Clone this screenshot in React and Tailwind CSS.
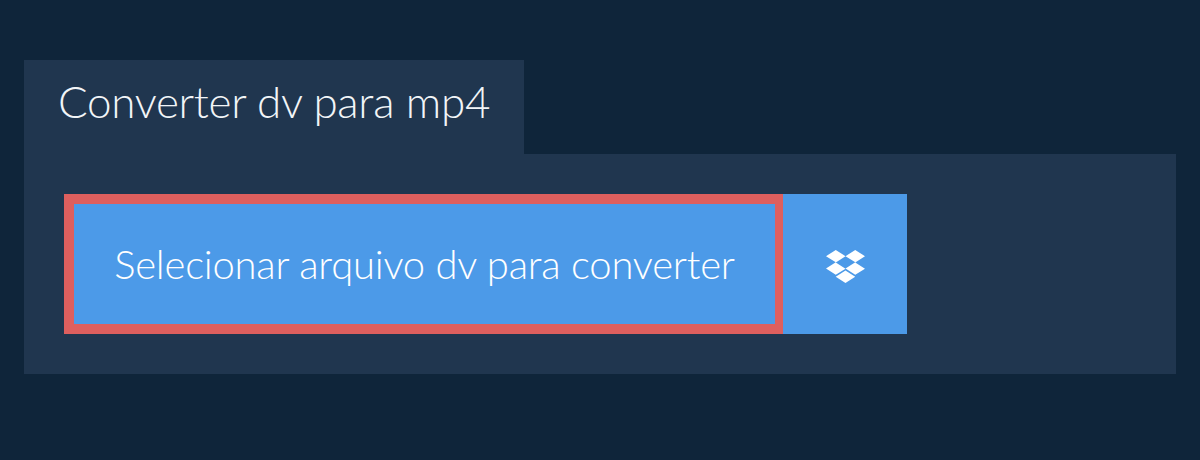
import { FaDropbox } from "react-icons/fa";

export default function App() {
  return (
    <div className="h-[460px] bg-[#0f253a] px-6 pt-[60px] font-['Lato',sans-serif]">
      <div className="flex h-[94px] w-[500px] items-center justify-center bg-[#20364f] pb-[12px] text-[44px] font-light tracking-[-0.3px] text-[#f2f5f8]">
        Converter dv para mp4
      </div>
      <div className="flex h-[220px] items-start bg-[#20364f] p-10">
        <button
          type="button"
          className="h-[140px] w-[719px] border-y-[10px] border-r-[8px] border-l-[10px] border-[#de5f5e] bg-[#4c9ae8] text-[40px] font-light tracking-[-0.22px] text-white"
        >
          Selecionar arquivo dv para converter
        </button>
        <button
          type="button"
          className="flex h-[140px] w-[124px] items-center justify-center bg-[#4c9ae8] pt-1 text-white"
        >
          <FaDropbox size={39} />
        </button>
      </div>
    </div>
  );
}
